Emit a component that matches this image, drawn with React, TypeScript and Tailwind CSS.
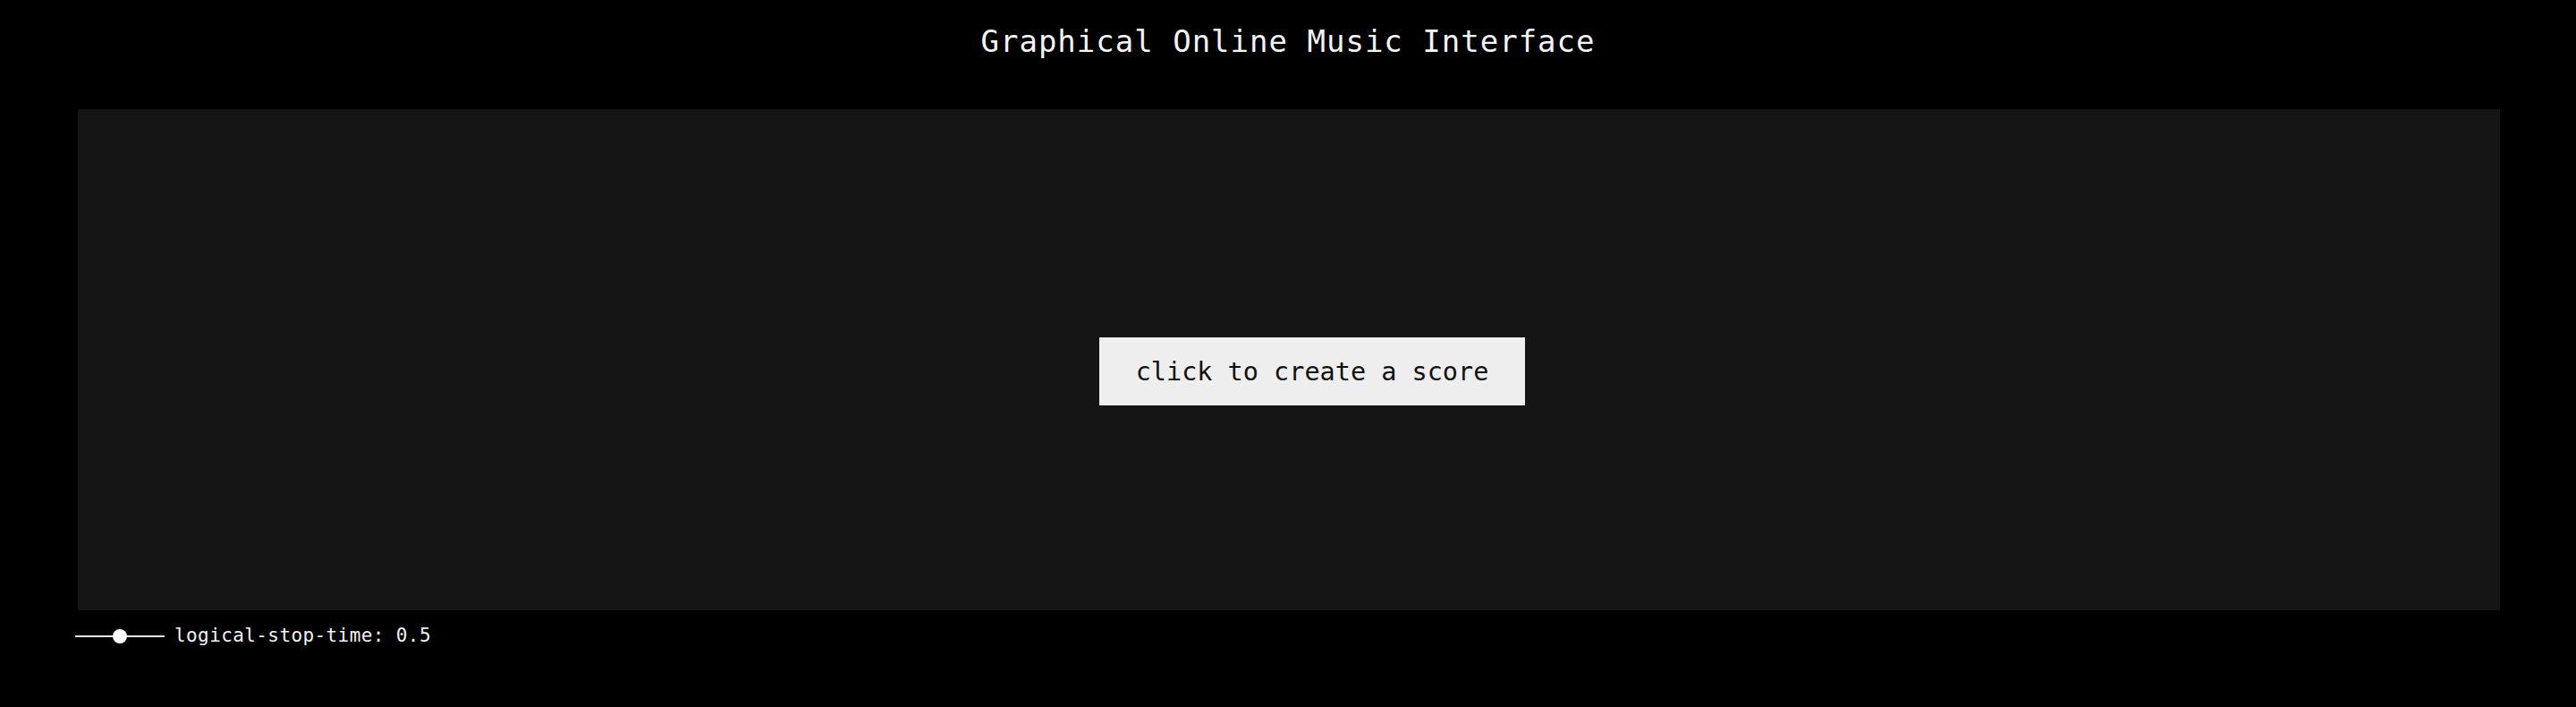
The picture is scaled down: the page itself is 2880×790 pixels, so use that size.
import { useState } from "react";

const mono = "font-['DejaVu_Sans_Mono','Liberation_Mono',monospace]";

const StopTimeSlider = ({ value }: { value: number }) => {
	return (
		<div className="relative w-[100px] h-[21px]">
			<div className="absolute left-0 right-0 top-[10px] h-[2px] bg-[#e6e6e6]" />
			<div
				className="absolute top-[3px] w-[16px] h-[16px] -ml-[8px] rounded-full bg-white"
				style={{ left: `${value * 100}%` }}
			/>
		</div>
	);
};

const App = () => {
	const [stopTime] = useState(0.5);
	const [created, setCreated] = useState(false);

	return (
		<div className={`min-h-[790px] bg-black text-white ${mono}`}>
			<h1 className="pt-[29px] text-center text-[34px] leading-[34px] tracking-[1px] text-[#f4f4f4] font-normal">
				Graphical Online Music Interface
			</h1>
			<div className="mt-[59px] ml-[87px] w-[2708px] h-[560px] bg-[#151515] flex items-center justify-center pl-[52px] pt-[26px]">
				{!created && (
					<button
						onClick={() => setCreated(true)}
						className="w-[476px] h-[76px] bg-[#eeeeee] text-[#111111] text-[28.5px] leading-[29px] flex items-center justify-center"
					>
						click to create a score
					</button>
				)}
			</div>
			<div className="mt-[18px] ml-[84px] flex items-start gap-[11px]">
				<StopTimeSlider value={stopTime} />
				<span className="text-[21px] leading-[21px] tracking-[0.4px] text-[#f2f2f2]">
					logical-stop-time: {stopTime}
				</span>
			</div>
		</div>
	);
};

export default App;
